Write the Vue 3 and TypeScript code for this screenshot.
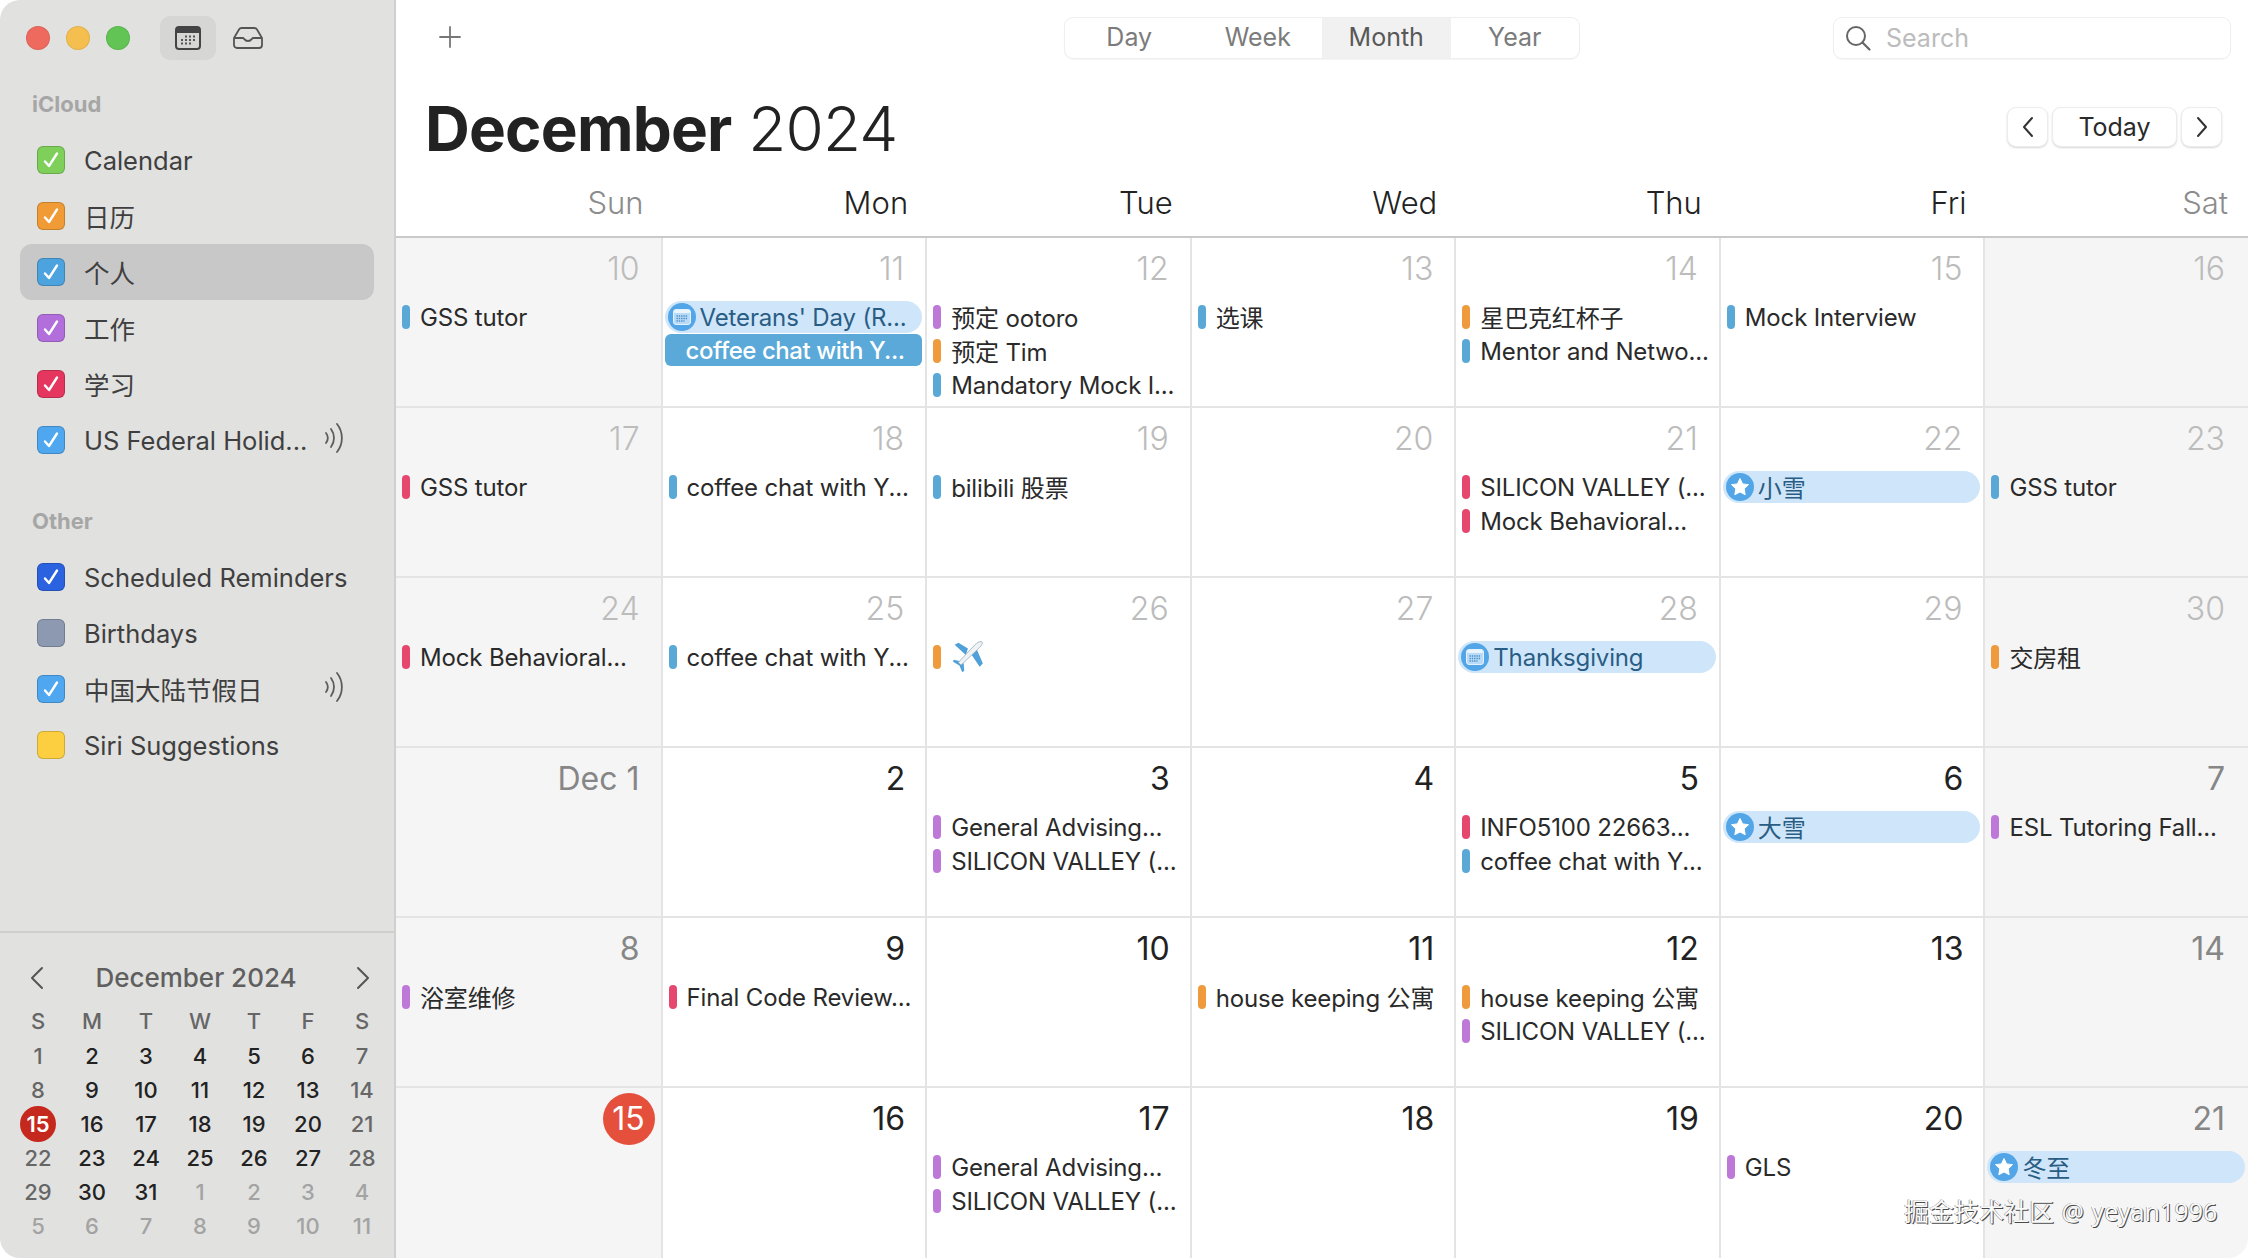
<script setup lang="ts">
type Kind = 'bar' | 'sel' | 'cal' | 'star' | 'plane'
interface Ev { t: string; k?: Kind; c?: string }
interface Cell { n: string; tone: 'past' | 'now' | 'off' | 'is-today'; ev: Ev[] }

const B = '#5aa8d6', P = '#bd78d8', O = '#ef9a3d', R = '#e5476f'
const ev = (t: string, c: string): Ev => ({ t, c, k: 'bar' })
const chat = ev('coffee chat with Y...', B)
const sv = (c: string) => ev('SILICON VALLEY (...', c)
const isCjk = (t: string) => /[\u4e00-\u9fff]/.test(t)

const weekdays = [
  { t: 'Sun', off: true }, { t: 'Mon' }, { t: 'Tue' }, { t: 'Wed' }, { t: 'Thu' }, { t: 'Fri' }, { t: 'Sat', off: true },
]

const cells: Cell[] = [
  { n: '10', tone: 'past', ev: [ev('GSS tutor', B)] },
  { n: '11', tone: 'past', ev: [{ t: "Veterans' Day (R...", k: 'cal' }, { t: 'coffee chat with Y...', k: 'sel' }] },
  { n: '12', tone: 'past', ev: [ev('预定 ootoro', P), ev('预定 Tim', O), ev('Mandatory Mock I...', B)] },
  { n: '13', tone: 'past', ev: [ev('选课', B)] },
  { n: '14', tone: 'past', ev: [ev('星巴克红杯子', O), ev('Mentor and Netwo...', B)] },
  { n: '15', tone: 'past', ev: [ev('Mock Interview', B)] },
  { n: '16', tone: 'past', ev: [] },
  { n: '17', tone: 'past', ev: [ev('GSS tutor', R)] },
  { n: '18', tone: 'past', ev: [chat] },
  { n: '19', tone: 'past', ev: [ev('bilibili 股票', B)] },
  { n: '20', tone: 'past', ev: [] },
  { n: '21', tone: 'past', ev: [sv(R), ev('Mock Behavioral...', R)] },
  { n: '22', tone: 'past', ev: [{ t: '小雪', k: 'star' }] },
  { n: '23', tone: 'past', ev: [ev('GSS tutor', B)] },
  { n: '24', tone: 'past', ev: [ev('Mock Behavioral...', R)] },
  { n: '25', tone: 'past', ev: [chat] },
  { n: '26', tone: 'past', ev: [{ t: '', k: 'plane', c: O }] },
  { n: '27', tone: 'past', ev: [] },
  { n: '28', tone: 'past', ev: [{ t: 'Thanksgiving', k: 'cal' }] },
  { n: '29', tone: 'past', ev: [] },
  { n: '30', tone: 'past', ev: [ev('交房租', O)] },
  { n: 'Dec 1', tone: 'off', ev: [] },
  { n: '2', tone: 'now', ev: [] },
  { n: '3', tone: 'now', ev: [ev('General Advising...', P), sv(P)] },
  { n: '4', tone: 'now', ev: [] },
  { n: '5', tone: 'now', ev: [ev('INFO5100 22663...', R), chat] },
  { n: '6', tone: 'now', ev: [{ t: '大雪', k: 'star' }] },
  { n: '7', tone: 'off', ev: [ev('ESL Tutoring Fall...', P)] },
  { n: '8', tone: 'off', ev: [ev('浴室维修', P)] },
  { n: '9', tone: 'now', ev: [ev('Final Code Review...', R)] },
  { n: '10', tone: 'now', ev: [] },
  { n: '11', tone: 'now', ev: [ev('house keeping 公寓', O)] },
  { n: '12', tone: 'now', ev: [ev('house keeping 公寓', O), sv(P)] },
  { n: '13', tone: 'now', ev: [] },
  { n: '14', tone: 'off', ev: [] },
  { n: '15', tone: 'is-today', ev: [] },
  { n: '16', tone: 'now', ev: [] },
  { n: '17', tone: 'now', ev: [ev('General Advising...', P), sv(P)] },
  { n: '18', tone: 'now', ev: [] },
  { n: '19', tone: 'now', ev: [] },
  { n: '20', tone: 'now', ev: [ev('GLS', P)] },
  { n: '21', tone: 'off', ev: [{ t: '冬至', k: 'star' }] },
]

interface CalItem { t: string; c: string; on: boolean; active?: boolean; feed?: boolean }
const sections: { title: string; items: CalItem[] }[] = [
  {
    title: 'iCloud',
    items: [
      { t: 'Calendar', c: '#7ed05a', on: true },
      { t: '日历', c: '#f09b35', on: true },
      { t: '个人', c: '#4da3dd', on: true, active: true },
      { t: '工作', c: '#b26fdc', on: true },
      { t: '学习', c: '#e5365f', on: true },
      { t: 'US Federal Holid...', c: '#4fa7ef', on: true, feed: true },
    ],
  },
  {
    title: 'Other',
    items: [
      { t: 'Scheduled Reminders', c: '#2a62e0', on: true },
      { t: 'Birthdays', c: '#8c99b0', on: false },
      { t: '中国大陆节假日', c: '#4fa7ef', on: true, feed: true },
      { t: 'Siri Suggestions', c: '#fccf40', on: false },
    ],
  },
]

const miniHead = ['S', 'M', 'T', 'W', 'T', 'F', 'S']
const miniDays: { n: number; muted: boolean; dim: boolean; cur: boolean }[] = []
for (let i = 0; i < 42; i++) {
  const inMonth = i < 31
  const n = inMonth ? i + 1 : i - 30
  const weekend = i % 7 === 0 || i % 7 === 6
  miniDays.push({ n, muted: !inMonth, dim: inMonth && weekend, cur: n === 15 && inMonth })
}
</script>

<template>
  <div class="window">
    <aside class="sidebar">
      <div class="toolbar">
        <span class="light red"></span>
        <span class="light yellow"></span>
        <span class="light green"></span>
        <span class="tool-btn">
          <svg width="26" height="24" viewBox="0 0 26 24">
            <rect x="1" y="1" width="24" height="22" rx="3" fill="none" stroke="#444" stroke-width="2" />
            <path d="M1 4a3 3 0 0 1 3-3h18a3 3 0 0 1 3 3v3H1z" fill="#444" />
            <g fill="#555">
              <rect x="10" y="9.500" width="2" height="2" /><rect x="14" y="9.500" width="2" height="2" /><rect x="18" y="9.500" width="2" height="2" />
              <rect x="6" y="13" width="2" height="2" /><rect x="10" y="13" width="2" height="2" /><rect x="14" y="13" width="2" height="2" /><rect x="18" y="13" width="2" height="2" />
              <rect x="6" y="16.500" width="2" height="2" /><rect x="10" y="16.500" width="2" height="2" /><rect x="14" y="16.500" width="2" height="2" />
            </g>
          </svg>
        </span>
        <svg class="inbox" width="30" height="22" viewBox="0 0 30 22">
          <path d="M1 11 6 2.500A3 3 0 0 1 8.600 1h12.800A3 3 0 0 1 24 2.500L29 11v7a3 3 0 0 1-3 3H4a3 3 0 0 1-3-3z" fill="none" stroke="#555" stroke-width="1.800" stroke-linejoin="round" />
          <path d="M1 11h9c1 0 1.500 3 5 3s4-3 5-3h9" fill="none" stroke="#555" stroke-width="1.800" stroke-linejoin="round" />
        </svg>
      </div>

      <section v-for="s in sections" :key="s.title" class="group">
        <div class="group-title">{{ s.title }}</div>
        <div v-for="it in s.items" :key="it.t" class="cal-row" :class="{ active: it.active }">
          <span class="check" :style="{ backgroundColor: it.c }">
            <svg v-if="it.on" width="18" height="18" viewBox="0 0 18 18">
              <path d="M3 10.500 7 15 15 2.500" fill="none" stroke="#fff" stroke-width="2.400" stroke-linecap="round" stroke-linejoin="round" />
            </svg>
          </span>
          <span class="cal-name" :class="{ cjk: isCjk(it.t) }">{{ it.t }}</span>
          <svg v-if="it.feed" class="feed" width="20" height="30" viewBox="0 0 20 30">
            <g fill="none" stroke="#5c5c5c" stroke-width="1.800" stroke-linecap="round">
              <path d="M2 10c2.200 3 2.200 7 0 10" />
              <path d="M7 6c4 5.500 4 12.500 0 18" />
              <path d="M13 1c6.500 8 6.500 20 0 28" />
            </g>
          </svg>
        </div>
      </section>

      <div class="mini">
        <div class="mini-head">
          <svg width="16" height="24" viewBox="0 0 16 24"><path d="M13 2 3 12l10 10" fill="none" stroke="#555" stroke-width="2" stroke-linecap="round" stroke-linejoin="round" /></svg>
          <span>December 2024</span>
          <svg width="16" height="24" viewBox="0 0 16 24"><path d="m3 2 10 10L3 22" fill="none" stroke="#555" stroke-width="2" stroke-linecap="round" stroke-linejoin="round" /></svg>
        </div>
        <div class="mini-grid">
          <span v-for="(h, i) in miniHead" :key="i" class="mini-h">{{ h }}</span>
          <span v-for="(d, i) in miniDays" :key="'d' + i" class="mini-d" :class="{ muted: d.muted, dim: d.dim }">
            <b v-if="d.cur">{{ d.n }}</b><template v-else>{{ d.n }}</template>
          </span>
        </div>
      </div>
    </aside>

    <main class="main">
      <header class="topbar">
        <div class="topbar-left">
          <svg width="22" height="22" viewBox="0 0 22 22"><path d="M11 1v20M1 11h20" stroke="#777" stroke-width="1.800" stroke-linecap="round" /></svg>
        </div>
        <div class="segments">
          <span class="seg">Day</span>
          <span class="seg">Week</span>
          <span class="seg on">Month</span>
          <span class="seg">Year</span>
        </div>
        <div class="topbar-right">
          <div class="search">
            <svg width="28" height="28" viewBox="0 0 28 28">
              <circle cx="12" cy="12" r="9" fill="none" stroke="#666" stroke-width="2" />
              <path d="m18.500 18.500 7 7" stroke="#666" stroke-width="2.200" stroke-linecap="round" />
            </svg>
            <span>Search</span>
          </div>
        </div>
      </header>

      <div class="titlebar">
        <h1><b>December</b> 2024</h1>
        <div class="nav">
          <span class="nav-btn arrow"><svg width="14" height="22" viewBox="0 0 14 22"><path d="M11 2 3 11l8 9" fill="none" stroke="#333" stroke-width="2" stroke-linecap="round" stroke-linejoin="round" /></svg></span>
          <span class="nav-btn nav-today">Today</span>
          <span class="nav-btn arrow"><svg width="14" height="22" viewBox="0 0 14 22"><path d="m3 2 8 9-8 9" fill="none" stroke="#333" stroke-width="2" stroke-linecap="round" stroke-linejoin="round" /></svg></span>
        </div>
      </div>

      <div class="weekdays">
        <span v-for="w in weekdays" :key="w.t" class="wd" :class="{ off: w.off }">{{ w.t }}</span>
      </div>

      <div class="grid">
        <div v-for="(c, i) in cells" :key="i" class="cell" :class="{ weekend: i % 7 === 0 || i % 7 === 6, first: i % 7 === 0, last: i % 7 === 6, bottom: i >= 35 }">
          <div class="num" :class="c.tone"><span>{{ c.n }}</span></div>
          <template v-for="(e, j) in c.ev" :key="j">
            <div v-if="e.k === 'bar'" class="ev">
              <i class="bar" :style="{ backgroundColor: e.c }"></i><span :class="{ cjk: isCjk(e.t) }">{{ e.t }}</span>
            </div>
            <div v-else-if="e.k === 'plane'" class="ev">
              <i class="bar" :style="{ backgroundColor: e.c }"></i>
              <svg class="plane" width="34" height="34" viewBox="0 0 32 32">
                <path d="M15 9 6 3.500 2.500 5.500 13 15z" fill="#4f9fd8" />
                <path d="M18 14 26 26l3-3-6-14z" fill="#4f9fd8" />
                <path d="M8 21 1.500 19.500 1 21.500 7 25l2.500 6 2-1-.5-7z" fill="#4f9fd8" />
                <path d="M28 2.500c-2-.5-4.500 1-6.500 3L6 22l2.500 2.500L25 9c2-2 4.500-4.500 3-6.500z" fill="#eef2f5" stroke="#9db0bf" stroke-width=".8" stroke-linejoin="round" />
              </svg>
            </div>
            <div v-else-if="e.k === 'sel'" class="pill sel"><span>{{ e.t }}</span></div>
            <div v-else class="pill">
              <span class="badge">
                <svg v-if="e.k === 'cal'" width="18" height="16" viewBox="0 0 18 16">
                  <rect x=".5" y=".5" width="17" height="15" rx="2.500" fill="#b9dbf7" stroke="#e2f1fd" />
                  <rect x="1" y="1" width="16" height="3" rx="1.500" fill="#eaf5fe" />
                  <path d="M3.500 7h11M3.500 9.500h11M3.500 12h8" stroke="#4a8fc8" stroke-width="1.300" stroke-dasharray="1.400 .9" />
                </svg>
                <svg v-else width="20" height="20" viewBox="0 0 20 20">
                  <path d="m10 1.500 2.600 5.400 5.900.8-4.300 4.100 1 5.900L10 15l-5.200 2.700 1-5.900L1.500 7.700l5.900-.8z" fill="#fff" stroke="#fff" stroke-width="1" stroke-linejoin="round" />
                </svg>
              </span>
              <span :class="{ cjk: isCjk(e.t) }">{{ e.t }}</span>
            </div>
          </template>
        </div>
      </div>
    </main>

    <div class="watermark">掘金技术社区 @ yeyan1996</div>
  </div>
</template>

<style>
html, body { margin: 0; background: #fff; }
</style>

<style scoped>
.window {
  position: relative;
  display: flex;
  width: 2248px;
  height: 1258px;
  overflow: hidden;
  border-radius: 20px;
  background: #fff;
  color: #2a2a2a;
  font-family: Inter, "Noto Sans CJK SC", sans-serif;
}
.cjk { margin-top: -2px; }

/* sidebar */
.sidebar {
  display: flex;
  flex-direction: column;
  flex: none;
  box-sizing: border-box;
  width: 396px;
  height: 100%;
  background: #e1e1e0;
  border-right: 2px solid #d0d0d0;
}
.toolbar { position: relative; display: flex; align-items: center; height: 76px; padding-left: 26px; flex: none; }
.light { width: 24px; height: 24px; border-radius: 50%; margin-right: 16px; box-sizing: border-box; border: 1px solid rgba(0, 0, 0, .08); }
.red { background: #ee6a5f; }
.yellow { background: #f5bf4f; }
.green { background: #61c454; }
.tool-btn { display: flex; align-items: center; justify-content: center; width: 56px; height: 44px; margin-left: 14px; border-radius: 10px; background: #d6d6d5; }
.inbox { margin-left: 17px; }

.group { flex: none; }
.group + .group { margin-top: 25px; }
.group-title { height: 56px; line-height: 56px; padding-left: 32px; font-size: 22px; font-weight: 700; color: #a6a6a6; }
.cal-row { position: relative; display: flex; align-items: center; height: 56px; margin: 0 20px; padding-left: 17px; border-radius: 12px; }
.cal-row.active { background: #c8c8c8; }
.check { display: flex; align-items: center; justify-content: center; box-sizing: border-box; flex: none; width: 28px; height: 28px; border-radius: 6px; border: 1px solid rgba(0, 0, 0, .18); }
.cal-name { margin-left: 19px; font-size: 25.500px; color: #3f3f3f; white-space: nowrap; }
.feed { position: absolute; left: 304px; top: 11px; }

.mini { margin-top: auto; height: 327px; box-sizing: border-box; border-top: 2px solid #cfcfcf; padding: 0 11px; flex: none; }
.mini-head { display: flex; align-items: center; justify-content: space-between; height: 90px; padding: 0 12px 0 18px; font-size: 26px; font-weight: 500; color: #5f5f5f; }
.mini-head span { margin: 0 8px 2px 0; }
.mini-grid { display: grid; grid-template-columns: repeat(7, 54px); grid-auto-rows: 34px; margin-top: -18px; }
.mini-h, .mini-d { display: flex; align-items: center; justify-content: center; font-size: 22px; font-weight: 500; }
.mini-h { color: #666; margin-top: -2px; }
.mini-d { color: #222; }
.mini-d.dim { color: #666; }
.mini-d.muted { color: #a3a3a3; }
.mini-d b { display: flex; align-items: center; justify-content: center; flex: none; width: 36px; height: 36px; border-radius: 50%; background: #c5281c; color: #fff; font-weight: 600; }

/* main */
.main { flex: 1; min-width: 0; display: flex; flex-direction: column; }
.topbar { display: grid; grid-template-columns: 1fr auto 1fr; align-items: center; height: 76px; flex: none; }
.topbar-left { display: flex; padding-left: 43px; margin-top: -2px; }
.topbar-right { display: flex; justify-content: flex-end; padding-right: 17px; }
.segments { display: flex; width: 516px; height: 42px; box-sizing: border-box; border: 1px solid #eee; border-radius: 9px; box-shadow: 0 1px 1px rgba(0, 0, 0, .04); overflow: hidden; }
.seg { display: flex; align-items: center; justify-content: center; flex: 1; padding-bottom: 2px; font-size: 25px; color: #7b7b7b; }
.seg.on { background: #f1f1f1; color: #585858; }
.search { display: flex; align-items: center; box-sizing: border-box; width: 398px; height: 42px; padding-left: 10px; gap: 14px; border: 1px solid #eee; border-radius: 9px; box-shadow: 0 1px 1px rgba(0, 0, 0, .04); font-size: 25px; color: #bcbcbc; }

.titlebar { display: flex; align-items: center; justify-content: space-between; height: 94px; box-sizing: border-box; padding: 12px 26px 0 29px; flex: none; }
h1 { margin: 0; font-size: 62px; line-height: 1; font-weight: 300; color: #222; letter-spacing: -.800px; white-space: nowrap; }
h1 b { font-weight: 700; }
.nav { display: flex; gap: 4px; margin-bottom: 4px; }
.nav-btn { display: flex; align-items: center; justify-content: center; height: 40px; box-sizing: border-box; background: #fff; border: 1px solid #ececec; border-radius: 9px; box-shadow: 0 1px 2px rgba(0, 0, 0, .16); }
.arrow { width: 41px; }
.nav-today { width: 125px; font-size: 25px; color: #2a2a2a; }

.weekdays { display: grid; grid-template-columns: repeat(7, 1fr); height: 68px; box-sizing: border-box; border-bottom: 2px solid #c9c9c9; flex: none; }
.wd { text-align: right; line-height: 66px; padding-right: 17px; font-size: 31px; font-weight: 300; color: #222; }
.wd:last-child { padding-right: 20px; }
.wd.off { color: #8c8c8c; }

.grid { flex: 1; display: grid; grid-template-columns: repeat(7, 1fr); grid-auto-rows: 170px; }
.cell { box-sizing: border-box; min-width: 0; border-left: 2px solid #e4e4e4; border-bottom: 2px solid #e4e4e4; }
.cell.first { border-left: 0; }
.cell.bottom { border-bottom: 0; }
.cell.weekend { background: #f5f5f5; }

.num { display: flex; justify-content: flex-end; align-items: center; height: 62px; padding: 0 21px 2px 0; box-sizing: border-box; font-size: 32px; font-weight: 400; white-space: nowrap; }
.num.past { color: #bcbcbc; font-weight: 300; }
.num.now { color: #222; padding-right: 20px; }
.num.off { color: #868686; }
.cell.last .num { padding-right: 23px; }
.num.is-today { padding-right: 6px; }
.num.is-today span { display: flex; align-items: center; justify-content: center; width: 52px; height: 52px; margin-top: 1px; border-radius: 50%; background: #e5503d; color: #fff; font-weight: 400; }

.ev { display: flex; align-items: center; height: 34px; padding-left: 6px; font-size: 24px; letter-spacing: -.150px; color: #2a2a2a; white-space: nowrap; overflow: hidden; }
.bar { flex: none; width: 8px; height: 24px; border-radius: 4px; margin-right: 10px; }
.plane { margin: -2px 0 0 1px; }
.pill { display: flex; align-items: center; height: 32px; margin: 1px 3px 1px 2px; padding-left: 3px; gap: 4px; border-radius: 16px; background: #cfe6fa; font-size: 24px; letter-spacing: -.150px; color: #2a5d84; white-space: nowrap; overflow: hidden; }
.pill.sel { padding-left: 21px; border-radius: 6px; background: #5aa9d8; color: #fff; font-weight: 500; letter-spacing: -.450px; }
.badge { display: flex; align-items: center; justify-content: center; flex: none; width: 28px; height: 28px; border-radius: 50%; background: #52a5e6; }

.watermark {
  position: absolute;
  left: 1904px;
  top: 1193px;
  font-family: "Noto Sans", "Noto Sans CJK SC", sans-serif;
  font-size: 25px;
  line-height: 36px;
  word-spacing: 1px;
  color: #fafafa;
  white-space: nowrap;
  text-shadow: 1px 1px 0 #4a4a4a, -.500px -.500px 0 #777;
}
</style>
